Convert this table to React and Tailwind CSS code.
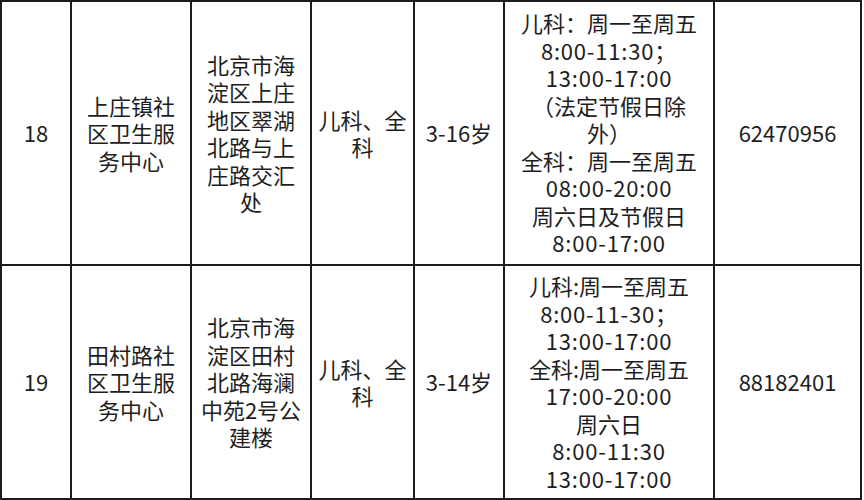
const rows = [
  {
    no: "18",
    name: ["上庄镇社", "区卫生服", "务中心"],
    addr: ["北京市海", "淀区上庄", "地区翠湖", "北路与上", "庄路交汇", "处"],
    dept: ["儿科、全", "科"],
    age: "3-16岁",
    hours: [
      "儿科：周一至周五",
      "8:00-11:30；",
      "13:00-17:00",
      "（法定节假日除",
      "外）",
      "全科：周一至周五",
      "08:00-20:00",
      "周六日及节假日",
      "8:00-17:00",
    ],
    phone: "62470956",
    h: "h-[262px]",
  },
  {
    no: "19",
    name: ["田村路社", "区卫生服", "务中心"],
    addr: ["北京市海", "淀区田村", "北路海澜", "中苑2号公", "建楼"],
    dept: ["儿科、全", "科"],
    age: "3-14岁",
    hours: [
      "儿科:周一至周五",
      "8:00-11-30；",
      "13:00-17:00",
      "全科:周一至周五",
      "17:00-20:00",
      "周六日",
      "8:00-11:30",
      "13:00-17:00",
    ],
    phone: "88182401",
    h: "h-[232px]",
  },
];

// time ranges are set a little looser, like the original sheet
const isTime = (l) => /^\d/.test(l) && l.includes(":");

const Cell = ({ lines, h }) => (
  <div className={`bg-white flex flex-col items-center justify-center text-center whitespace-nowrap ${h}`}>
    {lines.map((l, i) => (
      <span key={i} className={isTime(l) ? "tracking-[0.8px]" : ""}>
        {l}
      </span>
    ))}
  </div>
);

export default function App() {
  return (
    <div className="w-[864px] h-[500px] bg-white">
      <div
        className="w-[862px] grid grid-cols-[68px_118px_118px_101px_88px_208px_145px] gap-[2px] bg-[#1c1c1c] border-2 border-[#1c1c1c] text-[22px] leading-[27.5px] text-[#1e1e1e]"
        style={{ fontFamily: '"Noto Sans CJK SC", "Noto Sans", sans-serif' }}
      >
        {rows.map((r) => (
          <div key={r.no} className="contents">
            <Cell lines={[r.no]} h={r.h} />
            <Cell lines={r.name} h={r.h} />
            <Cell lines={r.addr} h={r.h} />
            <Cell lines={r.dept} h={r.h} />
            <Cell lines={[r.age]} h={r.h} />
            <Cell lines={r.hours} h={r.h} />
            <Cell lines={[r.phone]} h={r.h} />
          </div>
        ))}
      </div>
    </div>
  );
}
